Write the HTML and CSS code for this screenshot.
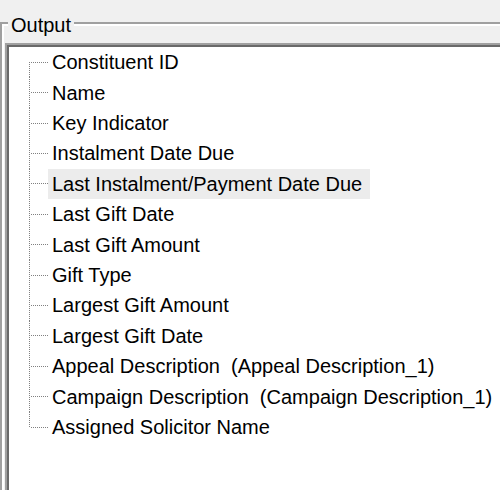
FILE: index.html
```html
<!DOCTYPE html>
<html>
<head>
<meta charset="utf-8">
<link rel="stylesheet" href="styles.css">
</head>
<body>
<div class="group">
  <div class="legend">Output</div>
  <div class="tree">
    <ul class="items">
      <li class="item first"><span class="conn"></span><span class="label">Constituent ID</span></li>
      <li class="item"><span class="conn"></span><span class="label">Name</span></li>
      <li class="item"><span class="conn"></span><span class="label">Key Indicator</span></li>
      <li class="item"><span class="conn"></span><span class="label">Instalment Date Due</span></li>
      <li class="item"><span class="conn"></span><span class="label selected">Last Instalment/Payment Date Due</span></li>
      <li class="item"><span class="conn"></span><span class="label">Last Gift Date</span></li>
      <li class="item"><span class="conn"></span><span class="label">Last Gift Amount</span></li>
      <li class="item"><span class="conn"></span><span class="label">Gift Type</span></li>
      <li class="item"><span class="conn"></span><span class="label">Largest Gift Amount</span></li>
      <li class="item"><span class="conn"></span><span class="label">Largest Gift Date</span></li>
      <li class="item"><span class="conn"></span><span class="label">Appeal Description  (Appeal Description_1)</span></li>
      <li class="item"><span class="conn"></span><span class="label">Campaign Description  (Campaign Description_1)</span></li>
      <li class="item last"><span class="conn"></span><span class="label">Assigned Solicitor Name</span></li>
    </ul>
  </div>
</div>
</body>
</html>
```
FILE: styles.css
```css
html, body {
  margin: 0;
  padding: 0;
  width: 500px;
  height: 490px;
  overflow: hidden;
  background: #f0f0f0;
  font-family: "Liberation Sans", Arial, sans-serif;
  font-size: 20px;
  color: #000;
}

.group {
  margin-top: 22px;
  height: 468px;
  box-sizing: border-box;
  border-top: 2px solid #a0a0a0;
  border-left: 2px solid #a0a0a0;
  box-shadow: inset 2px 2px 0 #ffffff;
}

.legend {
  width: fit-content;
  margin: -11px 0 0 6px;
  padding: 0 3px;
  line-height: 24px;
  height: 24px;
  background: #f0f0f0;
}

.tree {
  margin: 6px 0 0 3px;
  width: 495px;
  height: 447px;
  background: #ffffff;
  border-top: 2px solid #a0a0a0;
  border-left: 2px solid #a0a0a0;
  box-shadow: inset 2px 2px 0 #696969;
  padding: 2px 0 0 2px;
  box-sizing: border-box;
}

.items {
  list-style: none;
  margin: 0;
  padding: 0 0 0 20px;
}

.item {
  display: flex;
  align-items: center;
  height: 30.42px;
}

.conn {
  flex: none;
  align-self: stretch;
  width: 20px;
  margin-right: -1px;
  background:
    repeating-linear-gradient(to right, #808080 0 1px, transparent 1px 2px) 2px 50% / 18px 1px no-repeat,
    repeating-linear-gradient(to bottom, #808080 0 1px, transparent 1px 2px) 0 0 / 1px 100% no-repeat;
}

.first .conn {
  background:
    repeating-linear-gradient(to right, #808080 0 1px, transparent 1px 2px) 2px 50% / 18px 1px no-repeat,
    repeating-linear-gradient(to bottom, #808080 0 1px, transparent 1px 2px) 0 100% / 1px 50% no-repeat;
}

.last .conn {
  background:
    repeating-linear-gradient(to right, #808080 0 1px, transparent 1px 2px) 2px 50% / 18px 1px no-repeat,
    repeating-linear-gradient(to bottom, #808080 0 1px, transparent 1px 2px) 0 0 / 1px 50% no-repeat;
}

.label {
  white-space: pre;
  line-height: 30px;
  height: 30px;
  padding: 0 4px;
}

.selected {
  padding-right: 8px;
  background: #ececec;
}
```
